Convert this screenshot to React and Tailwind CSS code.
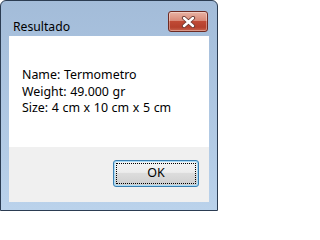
export default function App() {
  return (
    <div className="w-[218px] h-[211px] flex flex-col border border-[#2b3c52] rounded-t-[6px] bg-gradient-to-b from-[#a3bcd9] to-[#bad2eb] font-['Noto_Sans',sans-serif] text-[12px] text-black overflow-hidden">
      {/* title bar */}
      <div className="h-[35px] shrink-0 flex items-start justify-between pl-[12px] pr-[9px] pt-[10px]">
        <span className="mt-[8px] leading-[16px] text-[12.2px]">Resultado</span>
        <button className="w-[40px] h-[21px] rounded-[3px] border border-[#6e2a22] bg-[linear-gradient(#e8b3a4,#d98a78_45%,#c04a35_50%,#b5402c_80%,#c9654f)] flex items-center justify-center shadow-[inset_0_0_0_1px_rgba(255,255,255,0.35)]">
          <svg width="15" height="12" viewBox="0 0 15 12">
            <path d="M3 2 L12 10 M12 2 L3 10" stroke="#6b3a33" strokeWidth="4.2" strokeLinecap="round" />
            <path d="M3 2 L12 10 M12 2 L3 10" stroke="#ffffff" strokeWidth="2.4" strokeLinecap="round" />
          </svg>
        </button>
      </div>

      <div className="flex-1 flex flex-col mx-[8px]">
        {/* message */}
        <div className="h-[111px] bg-white pl-[13px] pt-[31px] leading-[16.5px] text-[12.4px] [word-spacing:0.4px]">
          <div>Name: Termometro</div>
          <div>Weight: 49.000 gr</div>
          <div>Size: 4 cm x 10 cm x 5 cm</div>
        </div>

        {/* buttons */}
        <div className="h-[55px] bg-[#f0f0f0] flex justify-end items-start pt-[13px] pr-[10px]">
          <button className="w-[86px] h-[27px] rounded-[3px] border border-[#3c7fb1] p-[1px] bg-[#a9dcf7]">
            <div className="w-full h-full rounded-[2px] bg-[linear-gradient(#f3f3f3,#ececec_45%,#dcdcdc_50%,#cfcfcf)] p-[1px]">
              <div className="w-full h-full border border-dotted border-black flex items-center justify-center text-[12.5px] leading-none">
                OK
              </div>
            </div>
          </button>
        </div>
      </div>
      <div className="h-[8px] shrink-0" />
    </div>
  )
}
